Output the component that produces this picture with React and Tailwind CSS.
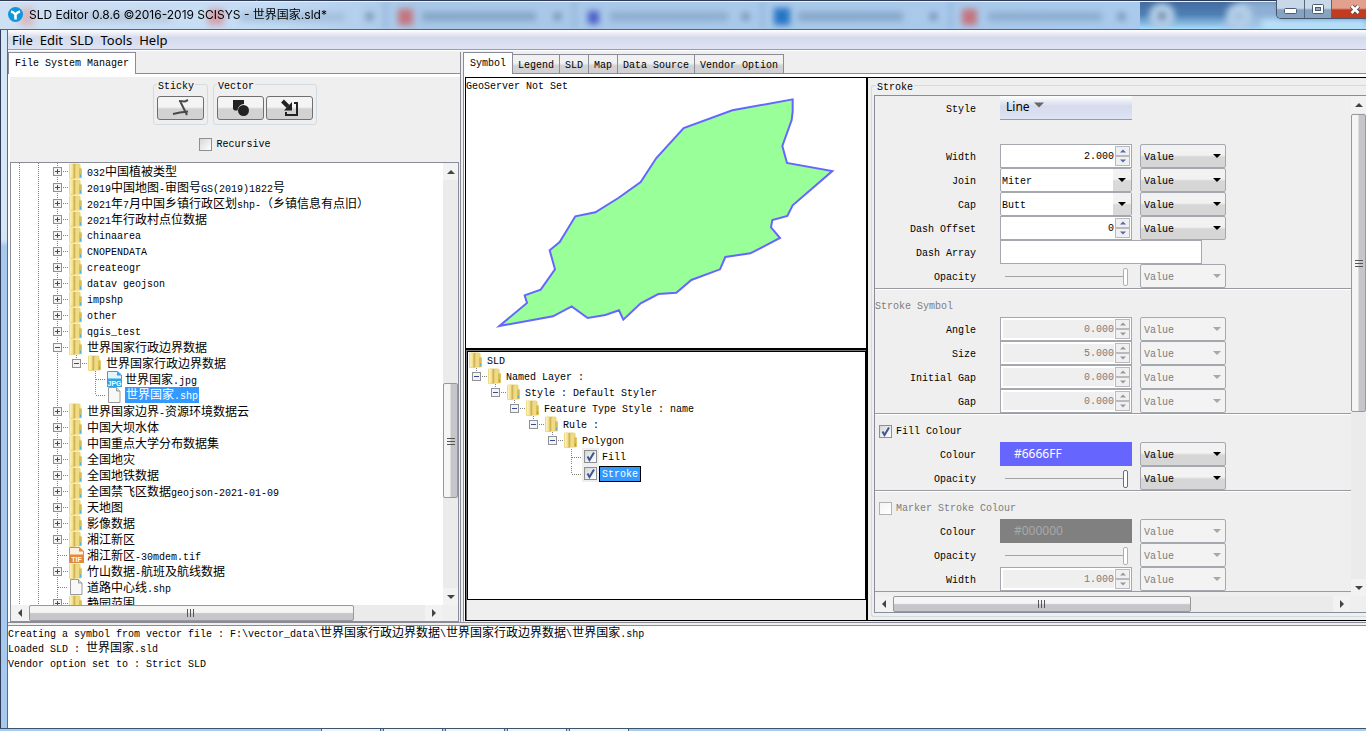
import { Fragment } from 'react';

const LOG_LINES = [
    'Creating a symbol from vector file : F:\\vector_data\\世界国家行政边界数据\\世界国家行政边界数据\\世界国家.shp',
    'Loaded SLD : 世界国家.sld',
    'Vendor option set to : Strict SLD',
];

// type: folder | jpg | tif | file, guides: one entry per column
// b = blank, l = vertical line, p = plus, m = minus, t = tee, e = last child
const FILE_ROWS = [
    { name: '032中国植被类型', guides: 'llp' },
    { name: '2019中国地图-审图号GS(2019)1822号', guides: 'llp' },
    { name: '2021年7月中国乡镇行政区划shp-（乡镇信息有点旧）', guides: 'llp' },
    { name: '2021年行政村点位数据', guides: 'llp' },
    { name: 'chinaarea', guides: 'llp' },
    { name: 'CNOPENDATA', guides: 'llp' },
    { name: 'createogr', guides: 'llp' },
    { name: 'datav geojson', guides: 'llp' },
    { name: 'impshp', guides: 'llp' },
    { name: 'other', guides: 'llp' },
    { name: 'qgis_test', guides: 'llp' },
    { name: '世界国家行政边界数据', guides: 'llm' },
    { name: '世界国家行政边界数据', guides: 'lllc' },
    { name: '世界国家.jpg', guides: 'lllbt', type: 'jpg' },
    { name: '世界国家.shp', guides: 'lllbe', type: 'file', selected: true },
    { name: '世界国家边界-资源环境数据云', guides: 'llp' },
    { name: '中国大坝水体', guides: 'llp' },
    { name: '中国重点大学分布数据集', guides: 'llp' },
    { name: '全国地灾', guides: 'llp' },
    { name: '全国地铁数据', guides: 'llp' },
    { name: '全国禁飞区数据geojson-2021-01-09', guides: 'llp' },
    { name: '天地图', guides: 'llp' },
    { name: '影像数据', guides: 'llp' },
    { name: '湘江新区', guides: 'llp' },
    { name: '湘江新区-30mdem.tif', guides: 'llt', type: 'tif' },
    { name: '竹山数据-航班及航线数据', guides: 'llp' },
    { name: '道路中心线.shp', guides: 'llt', type: 'file' },
    { name: '静园范围', guides: 'llp' },
];

const SLD_ROWS = [
    { name: 'SLD', guides: '' },
    { name: 'Named Layer :', guides: 'c' },
    { name: 'Style : Default Styler', guides: 'bc' },
    { name: 'Feature Type Style : name', guides: 'bbc' },
    { name: 'Rule :', guides: 'bbbc' },
    { name: 'Polygon', guides: 'bbbbc' },
];

// Chinese runs are set two pixels larger than the half-width Latin runs
const Mixed = ({ text }) =>
    text.split(/([^\x00-\x7f]+)/).map((run, i) =>
        i % 2 ? (
            <span key={i} className="text-[12px]">{run}</span>
        ) : (
            <Fragment key={i}>{run}</Fragment>
        )
    );

const Guide = ({ kind }) => {
    const box = kind === 'p' || kind === 'm' || kind === 'c';
    const dots = { stroke: '#808080', strokeDasharray: '1 1' };
    return (
        <svg width="19" height="16" className="shrink-0" aria-hidden="true">
            {'lpmt'.includes(kind) && <path d="M8.5 0V16" {...dots} />}
            {kind === 'e' && <path d="M8.5 0V8" {...dots} />}
            {kind === 'c' && <path d="M8.5 0V4" {...dots} />}
            {'te'.includes(kind) && <path d="M9 8.5H19" {...dots} />}
            {box && (
                <>
                    <path d="M14 8.5H19" {...dots} />
                    <rect x="4.5" y="4.5" width="8" height="8" fill="#f4f4f4" stroke="#919191" />
                    <path d="M6 8.5H11" stroke="#2f4d9a" />
                    {kind === 'p' && <path d="M8.5 6V11" stroke="#2f4d9a" />}
                </>
            )}
        </svg>
    );
};

const FolderIcon = () => (
    <svg width="19" height="16" className="shrink-0" aria-hidden="true">
        <path d="M1 1.500 2 .5h9l1.500 1v3l1.500 1.500v9l-2 .5H6l-1 .5H2l-1-1z" fill="#ead47a" />
        <path d="M1.500 1h4v14.500h-4z" fill="#f3e08c" />
        <path d="M2 1h1.500v14H2z" fill="#faf0ba" />
        <path d="M5.500 1h2v14l-2 1z" fill="#cfb25a" />
        <path d="M7.500 2 11 1v13.500L7.500 15.500z" fill="#efdb82" />
        <path d="M11 5.500h2.500V15H11z" fill="#d8bc58" />
        <path d="M12.500 11.500v2.500" stroke="#3fb4e8" />
    </svg>
);

const FileIcon = ({ type }) => {
    if (type === 'file') {
        return (
            <svg width="19" height="16" className="shrink-0" aria-hidden="true">
                <path d="M2.500 .5h8l3.500 3.500v11.500H2.500z" fill="#f8f8f8" stroke="#9a9a9a" />
                <path d="M10.500 .5V4H14" fill="#ddd" stroke="#9a9a9a" />
            </svg>
        );
    }
    const color = type === 'jpg' ? '#2ea3e6' : '#e08a3c';
    return (
        <svg width="19" height="16" className="shrink-0" aria-hidden="true">
            <path d="M1.500 .5h10L15.500 4v11.500h-14z" fill={type === 'jpg' ? '#e3f4fd' : '#fdf0e2'} stroke={color} />
            <path d="M11 .5V4.500h4.500z" fill={color} />
            <path d="M1 7.500h15V16H1z" fill={color} />
            <text x="8.500" y="14.500" textAnchor="middle" fontSize="7" fontWeight="bold" fill="#fff" fontFamily="Liberation Sans, sans-serif">
                {type.toUpperCase()}
            </text>
        </svg>
    );
};

const TreeRow = ({ row }) => (
    <li className="flex h-4 items-center whitespace-nowrap">
        {[...row.guides].map((kind, i) => (
            <Guide key={i} kind={kind} />
        ))}
        {row.type ? <FileIcon type={row.type} /> : <FolderIcon />}
        <span className={row.selected ? 'h-4 bg-[#3399ff] px-px leading-[18px] text-white' : 'h-4 leading-5'}>
            <Mixed text={row.name} />
        </span>
    </li>
);

const ARROWS = {
    up: 'M0 6 4 2 8 6z',
    down: 'M0 2 4 6 8 2z',
    left: 'M6 0 2 4 6 8z',
    right: 'M2 0 6 4 2 8z',
};

const Arrow = ({ dir, className = 'size-2 text-[#444]' }) => (
    <svg viewBox="0 0 8 8" className={className} aria-hidden="true">
        <path d={ARROWS[dir]} fill="currentColor" />
    </svg>
);

const ScrollBar = ({ vertical, before, thumb, after }) => (
    <div className={vertical ? 'flex w-[15px] shrink-0 flex-col bg-[#ebebeb]' : 'flex h-4 flex-1 bg-[#ebebeb]'}>
        <button type="button" aria-label={vertical ? 'Scroll up' : 'Scroll left'} className={vertical ? 'flex h-[17px] items-center justify-center bg-[#f2f2f2]' : 'flex w-[18px] items-center justify-center bg-[#f2f2f2]'}>
            <Arrow dir={vertical ? 'up' : 'left'} />
        </button>
        <div className={before} />
        <div className={`${thumb} flex items-center justify-center rounded-[2px] border border-[#989898] ${vertical ? 'bg-linear-to-r' : 'bg-linear-to-b'} from-[#f5f5f5] from-45% to-[#c6c6ca] to-55%`}>
            <svg width="8" height="8" className={vertical ? '' : 'rotate-90'} aria-hidden="true">
                <path d="M0 1.500H8M0 4.500H8M0 7.500H8" stroke="#555" />
            </svg>
        </div>
        <div className={after} />
        <button type="button" aria-label={vertical ? 'Scroll down' : 'Scroll right'} className={vertical ? 'flex h-[17px] items-center justify-center bg-[#f2f2f2]' : 'flex w-[17px] items-center justify-center bg-[#f2f2f2]'}>
            <Arrow dir={vertical ? 'down' : 'right'} />
        </button>
    </div>
);

const CheckBox = ({ id, checked, disabled, label }) => (
    <span className="relative flex size-[13px] shrink-0">
        <input
            id={id}
            type="checkbox"
            defaultChecked={checked}
            disabled={disabled}
            aria-label={label}
            className="peer size-[13px] appearance-none border border-[#8e8f8f] bg-linear-to-br from-[#d4d7dc] to-white disabled:border-[#b1b1b1] disabled:from-[#f4f4f4]"
        />
        <svg viewBox="0 0 13 13" className="pointer-events-none absolute inset-0 hidden peer-checked:block" aria-hidden="true">
            <path d="M3.500 6.500 5.500 10 10 2.500" fill="none" stroke="#3f5590" strokeWidth="2" />
        </svg>
    </span>
);

/* ---------- title bar and menu ---------- */

const GlassBackdrop = () => (
    <svg className="absolute inset-0 h-full w-full" viewBox="0 0 1366 29" preserveAspectRatio="none" aria-hidden="true">
        <defs>
            <linearGradient id="glass" x1="0" x2="1">
                <stop offset="0" stopColor="#cfe0f3" />
                <stop offset=".2" stopColor="#c4dcf5" />
                <stop offset=".3" stopColor="#a9c8e8" />
                <stop offset="1" stopColor="#a9cbee" />
            </linearGradient>
            <linearGradient id="sky" x1="0" x2="0" y1="0" y2="1">
                <stop offset="0" stopColor="#41699c" />
                <stop offset=".5" stopColor="#4f80b4" />
                <stop offset="1" stopColor="#a8dcfb" />
            </linearGradient>
            <filter id="soft"><feGaussianBlur stdDeviation="3" /></filter>
        </defs>
        <rect width="1366" height="29" fill="url(#glass)" />
        <rect x="1140" width="226" height="29" fill="url(#sky)" />
        <g filter="url(#soft)">
            <path d="M1240 0h40v29h-60z" fill="#a9c6e4" opacity=".7" />
            <circle cx="1162" cy="16" r="13" fill="#b4cfe9" />
            <circle cx="1239" cy="16" r="13" fill="#b4cfe9" />
            <rect x="1158" y="12" width="8" height="8" fill="#6681a3" />
            <rect x="1235" y="15" width="8" height="3" fill="#8ba5c2" />
            <path d="M1262 20h104v9h-104z" fill="#bfe3fb" />
            <rect x="20" y="8" width="14" height="18" fill="#d9a9ae" opacity=".7" />
            <rect x="208" y="9" width="16" height="16" fill="#d3a0aa" />
            <rect x="60" y="12" width="110" height="10" fill="#a9bdd4" opacity=".6" />
            <rect x="240" y="12" width="105" height="10" fill="#9db8d6" opacity=".7" />
            <rect x="398" y="9" width="15" height="16" fill="#c5747e" />
            <rect x="422" y="12" width="114" height="9" fill="#7d9dbf" opacity=".8" />
            <rect x="588" y="11" width="11" height="13" fill="#4a5fc4" />
            <rect x="610" y="12" width="118" height="9" fill="#86a6c8" opacity=".8" />
            <rect x="774" y="8" width="16" height="17" fill="#2874c4" />
            <rect x="798" y="12" width="105" height="9" fill="#7d9dbf" opacity=".8" />
            <rect x="962" y="9" width="15" height="16" fill="#c5747e" />
            <rect x="988" y="12" width="114" height="9" fill="#86a6c8" opacity=".8" />
            {[370, 558, 746, 934, 1122].map((x) => (
                <rect key={x} x={x - 4} y="13" width="7" height="7" fill="#6f8dad" />
            ))}
            {[386, 575, 763, 951].map((x) => (
                <rect key={x} x={x - 2} width="3" height="29" fill="#8fb2d8" />
            ))}
        </g>
        <path d="M0 1.500H1366" stroke="#e6f1fb" />
        <path d="M0 .5H1366" stroke="#2f3a55" />
    </svg>
);

const TitleBar = () => (
    <header className="relative flex h-[30px] shrink-0 items-center border-b border-[#59646f]">
        <GlassBackdrop />
        <svg width="15" height="15" className="relative ml-2" viewBox="0 0 15 15" aria-hidden="true">
            <circle cx="7.500" cy="7.500" r="7.500" fill="#0f97dc" />
            <path d="M3 4.500Q5.500 5 7.500 7.500Q9.500 5 12 4.500M7.500 7.500V12.500" fill="none" stroke="#fff" strokeWidth="2.600" />
        </svg>
        <h1 className="relative ml-1.5 font-['Inter','Noto_Sans_CJK_SC',sans-serif] text-[12px] leading-4 text-black">
            SLD Editor 0.8.6 ©2016-2019 SCISYS - 世界国家.sld*
        </h1>
        <div className="relative ml-auto flex h-[19px] self-start overflow-hidden rounded-bl-[5px] border-b border-l border-[#45566d]">
            <button type="button" aria-label="Minimize" className="flex w-7 items-center justify-center border-r border-[#54677f] bg-linear-to-b from-[#c9d8e8] from-45% to-[#86a3c2] to-55%">
                <svg width="13" height="6" className="mt-1" aria-hidden="true"><rect x=".5" y=".5" width="12" height="5" rx="1" fill="#fff" stroke="#4c5a6d" /></svg>
            </button>
            <button type="button" aria-label="Maximize" className="flex w-[27px] items-center justify-center border-r border-[#54677f] bg-linear-to-b from-[#c9d8e8] from-45% to-[#86a3c2] to-55%">
                <svg width="12" height="11" aria-hidden="true">
                    <rect x=".5" y=".5" width="11" height="9" rx="1" fill="#fff" stroke="#4c5a6d" />
                    <rect x="3.500" y="3.500" width="5" height="3" fill="#8fa9c6" stroke="#4c5a6d" />
                </svg>
            </button>
            <button type="button" aria-label="Close" className="flex w-[34px] items-center justify-center bg-linear-to-b from-[#e2a08f] from-45% to-[#c23a20] to-55% pl-3">
                <svg width="12" height="11" aria-hidden="true">
                    <path d="M2.500 2 9.500 9M9.500 2 2.500 9" stroke="#5a4a50" strokeWidth="4.500" />
                    <path d="M2.500 2 9.500 9M9.500 2 2.500 9" stroke="#fff" strokeWidth="2.500" />
                </svg>
            </button>
        </div>
    </header>
);

const MenuBar = () => (
    <nav className="flex h-5 shrink-0 items-center gap-[7px] border-b border-[#9b9da8] bg-linear-to-b from-white from-0% via-[#d5daec] via-40% to-[#dfe4f4] pl-1 font-['Noto_Sans',sans-serif] text-[13px] leading-4">
        {['File', 'Edit', 'SLD', 'Tools', 'Help'].map((item) => (
            <button key={item} type="button">{item}</button>
        ))}
    </nav>
);

const Tabs = ({ items }) => (
    <div role="tablist" className="flex h-[22px] shrink-0 items-end whitespace-nowrap">
        {items.map((item, i) => (
            <button
                key={item}
                type="button"
                role="tab"
                aria-selected={i === 0}
                className={
                    i === 0
                        ? 'h-[22px] border border-b-0 border-[#8a8d99] bg-white px-[6px] leading-[22px]'
                        : 'h-5 border border-l-0 border-[#8a8d99] bg-linear-to-b from-[#f1f1f1] from-45% to-[#d2d2d4] to-60% px-[5px] leading-[22px]'
                }
            >
                {item}
            </button>
        ))}
        <div className="h-5 flex-1 border-b border-[#8a8d99]" />
    </div>
);

/* ---------- left: file system ---------- */

const ToolButton = ({ label, children }) => (
    <button type="button" aria-label={label} className="flex h-6 w-[47px] items-center justify-center rounded-[3px] border border-[#707070] bg-linear-to-b from-[#f4f4f4] from-45% to-[#d2d2d2] to-55%">
        {children}
    </button>
);

const ToolGroup = ({ title, children }) => (
    <fieldset className="rounded-[3px] border border-[#d0dbe4] px-[3px] py-1">
        <legend className="px-px pt-[5px] leading-[10px]">{title}</legend>
        <div className="flex gap-[2px]">{children}</div>
    </fieldset>
);

const FilePane = () => (
    <section className="flex w-[453px] shrink-0 flex-col border-r border-[#8a8d99]">
        <Tabs items={['File System Manager']} />
        <div className="flex min-h-0 flex-1 flex-col border-t-[3px] border-l-2 border-white">
            <div className="flex justify-center gap-[5px]">
                <ToolGroup title="Sticky">
                    <ToolButton label="Sticky">
                        <svg width="18" height="18" aria-hidden="true">
                            <path d="M7 2 13 2.500 16 1M8 2 15 16M1 15 8 13.500 16 12.500" fill="none" stroke="#4a4a4a" strokeWidth="2" />
                        </svg>
                    </ToolButton>
                </ToolGroup>
                <ToolGroup title="Vector">
                    <ToolButton label="Shapes">
                        <svg width="18" height="18" aria-hidden="true">
                            <path d="M1 1h11v4A6.500 6.500 0 0 0 5.500 11.500H2.500L1 10z" fill="#222" />
                            <circle cx="11.500" cy="11.500" r="5.500" fill="#222" />
                        </svg>
                    </ToolButton>
                    <ToolButton label="Import">
                        <svg width="18" height="18" aria-hidden="true">
                            <path d="M1.500 2 7 7.500" stroke="#222" strokeWidth="4" />
                            <path d="M11 3v8.500H3z" fill="#222" />
                            <path d="M13 4h3v12H5v-3" fill="none" stroke="#222" strokeWidth="2" />
                        </svg>
                    </ToolButton>
                </ToolGroup>
            </div>
            <div className="mt-[13px] mb-[11px] flex items-center justify-center gap-1">
                <CheckBox id="recursive" />
                <label htmlFor="recursive" className="pt-px leading-3">Recursive</label>
            </div>
            <div className="mr-px flex min-h-0 flex-1 flex-col border border-[#8a8d99]">
                <div className="flex min-h-0 flex-1">
                    <ul className="min-w-0 flex-1 overflow-hidden bg-white">
                        {FILE_ROWS.map((row, i) => (
                            <TreeRow key={i} row={row} />
                        ))}
                    </ul>
                    <ScrollBar vertical before="flex-[203]" thumb="flex-[113]" after="flex-[90]" />
                </div>
                <div className="flex pr-4">
                    <ScrollBar before="flex-none" thumb="flex-[325]" after="flex-[72]" />
                </div>
            </div>
        </div>
    </section>
);

/* ---------- middle: preview and SLD tree ---------- */

const MapPreview = () => (
    <div className="relative h-[272px] shrink-0 border-b-2 border-black bg-white">
        <svg width="400" height="270" viewBox="-42 -36 1200 810" className="absolute top-0 left-0" aria-hidden="true">
            <polygon
                points="938,28 938,65 935,90 907,168 921,219 1057,243 938,346 922,378 877,390 873,412 900,444 811,490 736,501 720,538 634,570 589,608 535,612 482,640 430,689 417,661 376,675 323,684 275,649 219,679 58,708 141,639 134,616 182,599 225,538 209,481 239,456 286,379 346,367 415,324 482,276 529,204 611,114 757,61"
                fill="#99ff99"
                stroke="#6666ff"
                strokeWidth="6"
            />
        </svg>
        <p className="relative leading-[18px]">GeoServer Not Set</p>
    </div>
);

const SldTree = () => (
    <div className="flex min-h-0 flex-1 flex-col border-t border-l border-[#777] pb-5">
        <ul className="flex-1 border border-black bg-white">
            {SLD_ROWS.map((row) => (
                <TreeRow key={row.name} row={row} />
            ))}
            {['Fill', 'Stroke'].map((name, i) => (
                <li key={name} className="flex h-[17px] items-center">
                    {[...'bbbbb'].map((kind, n) => (
                        <Guide key={n} kind={kind} />
                    ))}
                    <Guide kind={i ? 'e' : 't'} />
                    <span className="flex h-[17px] w-[17px] items-center justify-center bg-[#efefef]">
                        <CheckBox checked label={name} />
                    </span>
                    <span className={i ? 'h-4 border border-black bg-[#3399ff] px-[2px] leading-4 text-white' : 'h-4 px-[3px] leading-[18px]'}>
                        {name}
                    </span>
                </li>
            ))}
        </ul>
    </div>
);

/* ---------- right: stroke form ---------- */

const ValueSelect = ({ disabled, label }) => (
    <span className="relative ml-2 flex">
        <select
            disabled={disabled}
            aria-label={`${label} source`}
            className="h-6 w-[86px] appearance-none rounded-[2px] border border-[#a6a8b0] bg-linear-to-b from-[#f2f2f2] from-45% to-[#d6d6d6] to-55% pt-[2px] pl-[3px] disabled:from-[#f3f3f3] disabled:to-[#f3f3f3] disabled:text-[#7d7d7d] disabled:opacity-100"
        >
            <option>Value</option>
        </select>
        <Arrow dir="down" className={`pointer-events-none absolute top-2 right-[5px] size-2 ${disabled ? 'text-[#a8a8a8]' : 'text-black'}`} />
    </span>
);

const Spinner = ({ id, value, disabled }) => (
    <div className="flex h-6 w-[132px] border border-[#a6a8b0] bg-white p-px">
        <input
            id={id}
            defaultValue={value}
            disabled={disabled}
            className="m-px min-w-0 flex-1 text-right disabled:bg-[#efefef] disabled:text-[#7d7d7d]"
        />
        <div className="flex w-[15px] flex-col">
            {['up', 'down'].map((dir) => (
                <button key={dir} type="button" disabled={disabled} aria-label={`Step ${dir}`} className="flex flex-1 items-center justify-center border border-[#b9bac0] bg-[#f0f0f0]">
                    <Arrow dir={dir} className={`size-[6px] ${disabled ? 'text-[#999]' : 'text-[#5468b4]'}`} />
                </button>
            ))}
        </div>
    </div>
);

const ComboBox = ({ id, value }) => (
    <div className="relative flex h-6 w-[132px]">
        <select id={id} className="w-full appearance-none rounded-[2px] border border-[#a6a8b0] bg-white pt-[2px] pl-px">
            <option>{value}</option>
        </select>
        <span className="pointer-events-none absolute inset-y-px right-px flex w-[18px] items-center justify-center bg-linear-to-b from-[#f2f2f2] from-45% to-[#d9d9d9] to-55%">
            <Arrow dir="down" className="size-2 text-black" />
        </span>
    </div>
);

const Slider = ({ id, disabled }) => (
    <input
        id={id}
        type="range"
        defaultValue="100"
        disabled={disabled}
        className="mr-1 ml-[5px] h-5 w-[123px] appearance-none bg-transparent [&::-webkit-slider-runnable-track]:h-px [&::-webkit-slider-runnable-track]:bg-[#a3a3a8] [&::-webkit-slider-thumb]:-mt-2 [&::-webkit-slider-thumb]:h-[18px] [&::-webkit-slider-thumb]:w-[5px] [&::-webkit-slider-thumb]:appearance-none [&::-webkit-slider-thumb]:rounded-[2px] [&::-webkit-slider-thumb]:border [&::-webkit-slider-thumb]:border-[#6e6e6e] [&::-webkit-slider-thumb]:bg-white disabled:[&::-webkit-slider-thumb]:border-[#b0b0b0]"
    />
);

const ColourButton = ({ id, value, disabled }) => (
    <button
        id={id}
        type="button"
        disabled={disabled}
        className="h-6 w-[132px] bg-[#6666ff] pl-[14px] text-left font-['Noto_Sans',sans-serif] text-[12px] leading-6 text-white disabled:bg-[#808080] disabled:text-[#a8a8a8]"
    >
        {value}
    </button>
);

const Row = ({ label, id, disabled, noSource, children }) => (
    <div className="flex h-6 items-center">
        <label htmlFor={id} className="mr-6 w-[101px] shrink-0 pt-1 text-right leading-4">{label}</label>
        {children}
        {!noSource && <ValueSelect disabled={disabled} label={label} />}
    </div>
);

const Section = ({ title, children }) => (
    <div className={title ? 'border-t border-b border-t-white border-b-[#9a9ba0]' : 'border-b border-[#9a9ba0]'}>
        {title && <div className="flex h-[27px] items-center gap-1 pt-[6px]">{title}</div>}
        {children}
    </div>
);

const StrokePanel = () => (
    <div className="min-w-0 flex-1 border-y border-l-2 border-black bg-[#efefef] pb-[3px] pl-[3px]">
        <fieldset className="flex h-full min-h-0 flex-col rounded-l-[3px] border border-r-0 border-[#d0dbe4] pb-[3px] pl-[2px]">
            <legend className="ml-[2px] px-px pt-[5px] leading-[10px]">Stroke</legend>
            <div className="mt-[2px] flex min-h-0 flex-1 flex-col overflow-hidden border border-r-0 border-[#8a8d99]">
                <div className="flex min-h-0 flex-1">
                    <form className="min-w-0 flex-1 overflow-hidden" onSubmit={(e) => e.preventDefault()}>
                        <Section>
                            <div className="mb-6">
                                <Row label="Style" id="style" noSource>
                                    <button id="style" type="button" className="flex h-6 w-[132px] gap-1 border-b border-[#9a9ba0] bg-linear-to-b from-white via-[#d5daec] via-45% to-[#dfe4f4] pl-[6px] font-['Noto_Sans',sans-serif] text-[12px] leading-[22px]">
                                        Line
                                        <Arrow dir="down" className="mt-1 size-[10px] text-[#666]" />
                                    </button>
                                </Row>
                            </div>
                            <Row label="Width" id="width"><Spinner id="width" value="2.000" /></Row>
                            <Row label="Join" id="join"><ComboBox id="join" value="Miter" /></Row>
                            <Row label="Cap" id="cap"><ComboBox id="cap" value="Butt" /></Row>
                            <Row label="Dash Offset" id="dash-offset"><Spinner id="dash-offset" value="0" /></Row>
                            <Row label="Dash Array" id="dash-array" noSource>
                                <input id="dash-array" className="h-6 w-[202px] border border-[#a6a8b0] bg-white px-1" />
                            </Row>
                            <Row label="Opacity" id="opacity" disabled><Slider id="opacity" disabled /></Row>
                        </Section>
                        <Section title={<span className="leading-4 text-[#7d7d7d]">Stroke Symbol</span>}>
                            <Row label="Angle" id="angle" disabled><Spinner id="angle" value="0.000" disabled /></Row>
                            <Row label="Size" id="size" disabled><Spinner id="size" value="5.000" disabled /></Row>
                            <Row label="Initial Gap" id="initial-gap" disabled><Spinner id="initial-gap" value="0.000" disabled /></Row>
                            <Row label="Gap" id="gap" disabled><Spinner id="gap" value="0.000" disabled /></Row>
                        </Section>
                        <Section
                            title={
                                <span className="flex items-center gap-1 pl-1">
                                    <CheckBox id="fill-colour" checked />
                                    <label htmlFor="fill-colour" className="leading-4">Fill Colour</label>
                                </span>
                            }
                        >
                            <Row label="Colour" id="fill-value"><ColourButton id="fill-value" value="#6666FF" /></Row>
                            <Row label="Opacity" id="fill-opacity"><Slider id="fill-opacity" /></Row>
                        </Section>
                        <Section
                            title={
                                <span className="flex items-center gap-1 pl-1">
                                    <CheckBox id="marker-colour" disabled />
                                    <label htmlFor="marker-colour" className="leading-4 text-[#7d7d7d]">Marker Stroke Colour</label>
                                </span>
                            }
                        >
                            <Row label="Colour" id="marker-value" disabled><ColourButton id="marker-value" value="#000000" disabled /></Row>
                            <Row label="Opacity" id="marker-opacity" disabled><Slider id="marker-opacity" disabled /></Row>
                            <Row label="Width" id="marker-width" disabled><Spinner id="marker-width" value="1.000" disabled /></Row>
                        </Section>
                    </form>
                    <ScrollBar vertical before="flex-[1]" thumb="flex-[298]" after="flex-[168]" />
                </div>
                <div className="flex pr-4">
                    <ScrollBar before="flex-none" thumb="flex-[297]" after="flex-[143]" />
                </div>
            </div>
        </fieldset>
    </div>
);

const App = () => (
    <div className="flex h-screen flex-col overflow-hidden bg-[#b5d1f0] font-['Liberation_Mono','Noto_Sans_CJK_SC',monospace] text-[10px] text-black">
        <TitleBar />
        <div className="flex min-h-0 flex-1">
            <div className="w-2 shrink-0 border-r border-l border-r-[#5d6b7c] border-l-[#2f3a55] bg-linear-to-b from-[#d5e6f7] from-30% to-[#a6caee] to-31%" />
            <div className="flex min-w-0 flex-1 flex-col bg-[#efefef]">
                <MenuBar />
                <main className="flex min-h-0 flex-1 border-t border-b border-t-white border-b-[#8a8d99] pt-px">
                    <FilePane />
                    <section className="ml-[2px] flex min-w-0 flex-1 flex-col">
                        <Tabs items={['Symbol', 'Legend', 'SLD', 'Map', 'Data Source', 'Vendor Option']} />
                        <div className="flex min-h-0 flex-1 border-b border-l border-b-[#efefef] border-l-[#8a8d99] bg-white pt-[3px] pl-px">
                            <div className="flex w-[401px] shrink-0 flex-col border-y border-l border-black bg-[#efefef]">
                                <MapPreview />
                                <SldTree />
                            </div>
                            <StrokePanel />
                        </div>
                    </section>
                </main>
                <div className="mt-[2px] h-[103px] shrink-0 border-t border-[#8a8d99] bg-white pt-px">
                    {LOG_LINES.map((line) => (
                        <p key={line} className="h-[15px] leading-[15px] whitespace-nowrap"><Mixed text={line} /></p>
                    ))}
                </div>
            </div>
        </div>
        <footer className="flex h-[3px] shrink-0 gap-[2px] border-t border-[#3f5468] bg-[#a6cdf2] pl-[321px]">
            {[0, 1, 2, 3, 4].map((n) => (
                <div key={n} className="w-[60px] border-x border-[#4d6378] bg-[#e9f3fc]" />
            ))}
        </footer>
    </div>
);

export default App;
